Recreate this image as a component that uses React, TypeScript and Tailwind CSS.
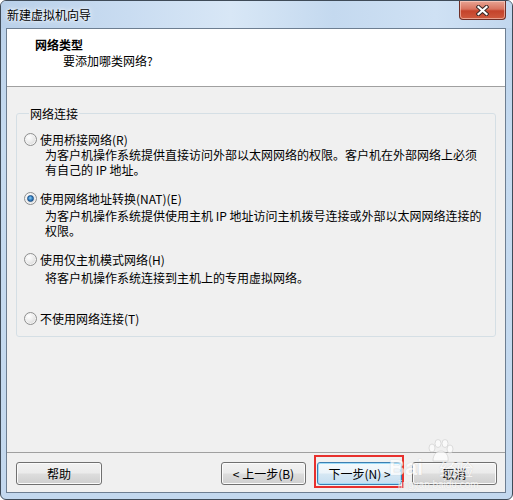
import React from "react";

const cjk = "font-['Noto_Sans_CJK_SC','Noto_Sans',sans-serif]";

function Radio({ checked = false }: { checked?: boolean }) {
  return (
    <span className="flex h-[13px] w-[13px] shrink-0 items-center justify-center rounded-full border border-[#8e8f8f] bg-[radial-gradient(circle_at_35%_30%,#ffffff_0%,#ececec_45%,#cfcfcf_100%)] shadow-[inset_0_0_0_1px_#f4f4f4]">
      {checked && (
        <span className="h-[7px] w-[7px] rounded-full border border-[#1b4f86] bg-[radial-gradient(circle_at_45%_40%,#8fd0f5_0%,#3a87c7_45%,#1a4f8a_100%)]" />
      )}
    </span>
  );
}

function Option({
  label,
  lines,
  checked,
  gap = 0,
}: {
  label: string;
  lines: string[];
  checked?: boolean;
  gap?: number;
}) {
  return (
    <div className="flex flex-col">
      <div className="flex h-[15px] items-center gap-[3px]">
        <Radio checked={checked} />
        <span className="whitespace-nowrap">{label}</span>
      </div>
      {lines.length > 0 && (
        <div className={`pl-[21px] ${gap === 2 ? "mt-[2px]" : gap === 3 ? "mt-[3px]" : ""}`}>
          {lines.map((l) => (
            <div key={l} className="h-[15px] whitespace-nowrap">
              {l}
            </div>
          ))}
        </div>
      )}
    </div>
  );
}

function WinButton({ children, primary = false }: { children: React.ReactNode; primary?: boolean }) {
  return (
    <button
      className={`flex h-[23px] w-[85px] items-center justify-center rounded-[3px] border text-[12px] leading-[15px] text-black ${
        primary
          ? "border-[#3c7fb1] bg-[linear-gradient(#f4f9fc_0%,#ecf4fa_48%,#d6e8f4_52%,#c6def0_100%)] shadow-[inset_0_0_0_1px_#9fdcf8]"
          : "border-[#707070] bg-[linear-gradient(#f2f2f2_0%,#ebebeb_48%,#dddddd_52%,#cfcfcf_100%)] shadow-[inset_0_0_0_1px_#fbfbfb]"
      }`}
    >
      {children}
    </button>
  );
}

function CloseGlyph() {
  return (
    <svg width="13" height="11" viewBox="0 0 13 11">
      <path d="M2.5 2 L10.5 9 M10.5 2 L2.5 9" stroke="#3a2a28" strokeWidth="4.2" strokeLinecap="square" />
      <path d="M2.5 2 L10.5 9 M10.5 2 L2.5 9" stroke="#ffffff" strokeWidth="2.2" strokeLinecap="square" />
    </svg>
  );
}

function Watermark() {
  return (
    <div className="pointer-events-none absolute left-[388px] top-[438px] flex flex-col items-start opacity-70">
      <svg width="34" height="24" viewBox="0 0 34 24" className="ml-[34px]">
        <g fill="#ffffff" stroke="#c9c9c9" strokeWidth="0.8">
          <ellipse cx="9" cy="9" rx="3" ry="4" />
          <ellipse cx="15" cy="4.5" rx="3" ry="4" />
          <ellipse cx="22" cy="4.5" rx="3" ry="4" />
          <ellipse cx="27" cy="10" rx="3" ry="4" />
          <path d="M10 22 C10 15 14 12 18 12 C22 12 26 16 25 22 Z" />
        </g>
      </svg>
      <div className="-mt-[6px] flex items-end gap-[16px]">
        <span className="font-['Liberation_Sans',sans-serif] text-[22px] font-bold leading-[22px] text-white [text-shadow:0_0_1px_#b8b8b8]">
          Bai
        </span>
        <span className={`${cjk} text-[17px] leading-[20px] text-white [text-shadow:0_0_1px_#b8b8b8]`}>经验</span>
      </div>
      <span className="ml-[9px] font-['Liberation_Sans',sans-serif] text-[10px] leading-[12px] text-white [text-shadow:0_0_1px_#b8b8b8]">
        jingyan.baidu.com
      </span>
    </div>
  );
}

export default function App() {
  return (
    <div className={`${cjk} relative h-[500px] w-[513px] overflow-hidden rounded-[6px] border border-[#3f4b58] bg-[linear-gradient(180deg,#bad1ea_0%,#c6dbf0_30%,#c3d8ee_100%)] text-[12px] leading-[15px] text-black`}>
      {/* title bar */}
      <div className="flex h-[27px] items-start justify-between bg-[linear-gradient(90deg,#b9d0e9_0%,#c9dcf1_25%,#d8e7f6_45%,#c4d9ef_65%,#cfe1f4_85%,#c2d7ee_100%)]">
        <span className="self-center pl-[6px] text-[12px] leading-[15px] text-black [text-shadow:0_0_6px_#ffffff,0_0_3px_#ffffff]">
          新建虚拟机向导
        </span>
        <div className="mr-[6px] flex h-[19px] w-[47px] items-center justify-center rounded-b-[4px] border border-t-0 border-[#6e2f27] bg-[linear-gradient(180deg,#e8a493_0%,#d8735f_45%,#c4432b_55%,#cf5a3e_100%)] shadow-[inset_0_0_0_1px_rgba(255,220,210,0.55)]">
          <CloseGlyph />
        </div>
      </div>

      {/* client area */}
      <div className="ml-[5px] flex h-[465px] w-[500px] flex-col border border-[#6d7e91] bg-[#f0f0f0]">
        {/* wizard header */}
        <div className="flex h-[58px] flex-col border-b border-[#a0a0a0] bg-white pt-[8px]">
          <span className="pl-[28px] font-bold">网络类型</span>
          <span className="mt-[1px] pl-[56px]">要添加哪类网络?</span>
        </div>

        {/* body */}
        <div className="flex-1">
          <fieldset className="mx-[9px] mt-[19px] rounded-[3px] border border-[#d5dfe5] pb-[10px] pl-[7px] pt-[11px]">
            <legend className="ml-[5px] px-[1px] leading-[15px]">网络连接</legend>
            <div className="flex flex-col">
              <Option
                label="使用桥接网络(R)"
                lines={["为客户机操作系统提供直接访问外部以太网网络的权限。客户机在外部网络上必须", "有自己的 IP 地址。"]}
              />
              <div className="mt-[14px]">
                <Option
                  checked
                  gap={2}
                  label="使用网络地址转换(NAT)(E)"
                  lines={["为客户机操作系统提供使用主机 IP 地址访问主机拨号连接或外部以太网网络连接的", "权限。"]}
                />
              </div>
              <div className="mt-[14px]">
                <Option gap={3} label="使用仅主机模式网络(H)" lines={["将客户机操作系统连接到主机上的专用虚拟网络。"]} />
              </div>
              <div className="mt-[26px]">
                <Option label="不使用网络连接(T)" lines={[]} />
              </div>
            </div>
          </fieldset>
        </div>

        {/* footer buttons */}
        <div className="flex h-[40px] items-start justify-between border-t border-[#a0a0a0] pl-[9px] pr-[8px] pt-[9px]">
          <button className="flex h-[23px] w-[86px] items-center justify-center rounded-[3px] border border-[#707070] bg-[linear-gradient(#f2f2f2_0%,#ebebeb_48%,#dddddd_52%,#cfcfcf_100%)] text-[12px] leading-[15px] shadow-[inset_0_0_0_1px_#fbfbfb]">
            帮助
          </button>
          <div className="flex items-start">
            <WinButton>&lt; 上一步(B)</WinButton>
            <div className="relative ml-[11px]">
              <WinButton primary>下一步(N) &gt;</WinButton>
              <span className="pointer-events-none absolute -bottom-[3px] -left-[3px] -right-[2px] -top-[7px] border-2 border-[#e8302d]" />
            </div>
            <div className="ml-[10px]">
              <WinButton>取消</WinButton>
            </div>
          </div>
        </div>
      </div>

      <Watermark />
    </div>
  );
}
